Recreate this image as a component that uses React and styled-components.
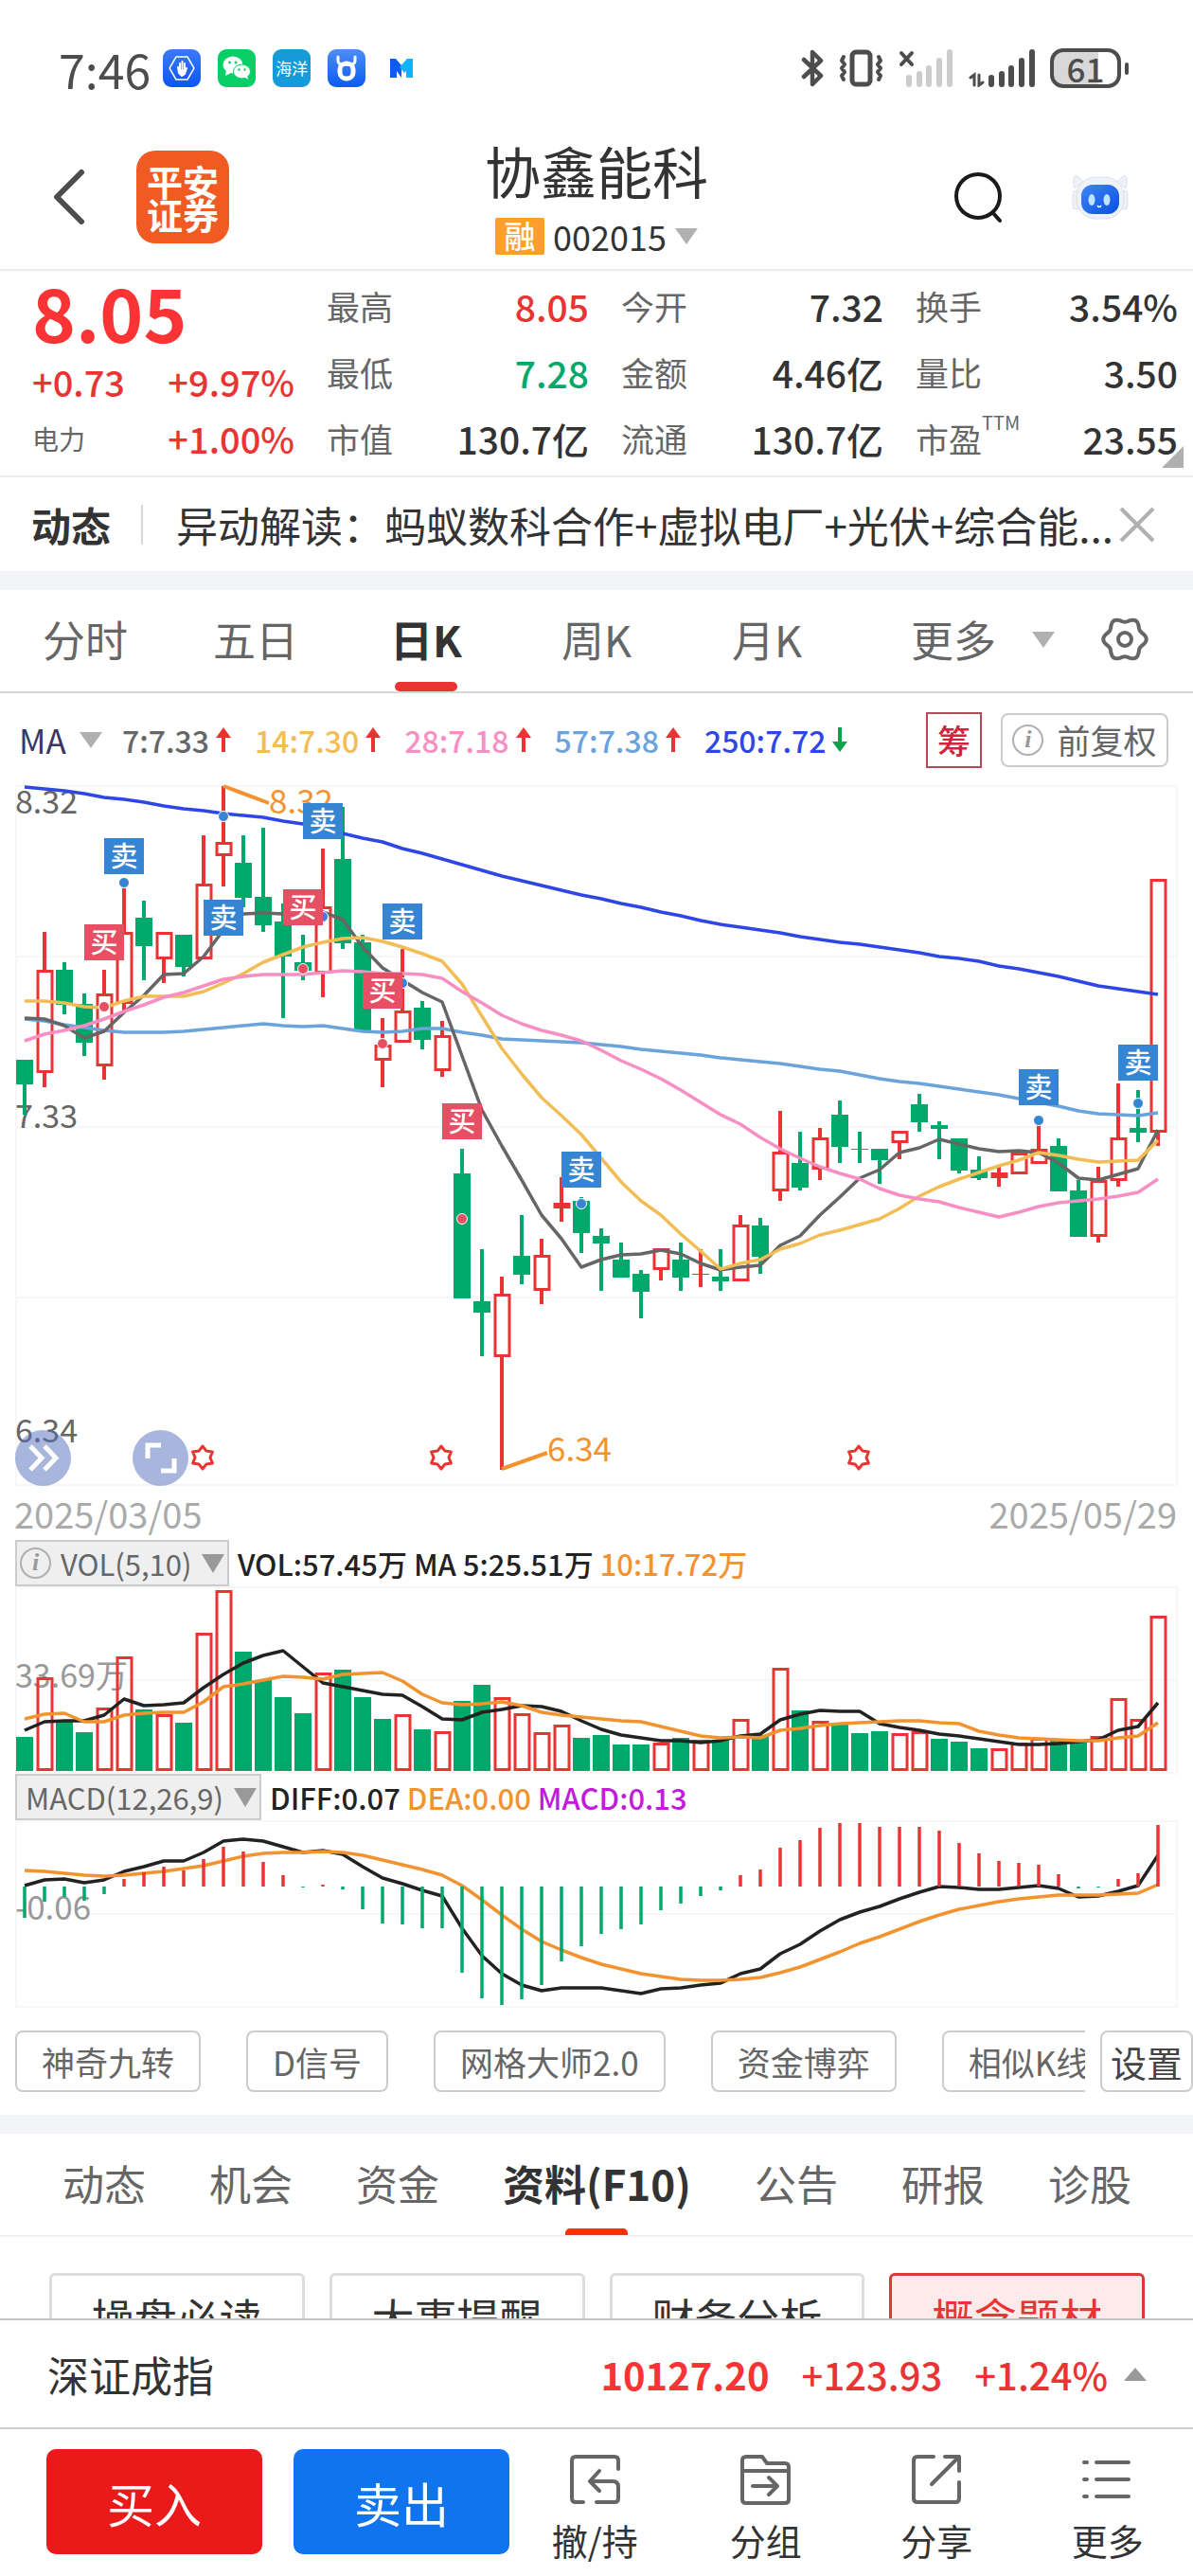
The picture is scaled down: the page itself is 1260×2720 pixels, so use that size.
import React, { useState } from "react";
import styled, { createGlobalStyle } from "styled-components";

const GlobalStyle = createGlobalStyle`
  * {
    box-sizing: border-box;
  }
  body {
    margin: 0;
    background: #fff;
    color: #333;
    font-family: "Noto Sans CJK SC", "Noto Sans", sans-serif;
  }
  button,
  select {
    margin: 0;
    padding: 0;
    border: 0;
    background: none;
    color: inherit;
    font: inherit;
    cursor: pointer;
  }
  select {
    appearance: none;
  }
  svg {
    display: block;
    flex: none;
  }
`;

const RED = "#ea3434";
const GREEN = "#00a96b";
const ORANGE = "#f39330";
const FONT = '"Noto Sans CJK SC", "Noto Sans", sans-serif';

const Page = styled.div`
  display: flex;
  flex-direction: column;
  height: 100vh;
  overflow: hidden;
`;

const Content = styled.main`
  flex: 1;
  min-height: 0;
  overflow: hidden;
`;

const Band = styled.div`
  height: 20px;
  background: #f3f4f8;
`;

const Triangle = styled.span`
  display: block;
  flex: none;
  width: 0;
  height: 0;
  border: solid transparent;
  border-width: ${(p) => (p.$up ? "0 12px 14px" : p.$tall ? "20px 12px 0" : "17px 12px 0")};
  border-${(p) => (p.$up ? "bottom" : "top")}-color: ${(p) => p.$color || "#b0b0b0"};
`;

/* status bar */

const StatusBar = styled.div`
  display: flex;
  align-items: center;
  height: 144px;
  padding: 0 76px 0 62px;
  color: #4d4d4d;
`;

const Clock = styled.span`
  margin-right: 13px;
  font-size: 50px;
  line-height: 56px;
`;

const StatusIcons = styled.div`
  display: flex;
  align-items: center;
  gap: ${(p) => p.$gap}px;
  margin-left: ${(p) => (p.$end ? "auto" : "0")};
`;

const AppBadge = styled.span`
  display: flex;
  align-items: center;
  justify-content: center;
  width: 40px;
  height: 40px;
  border-radius: 9px;
  background: ${(p) => p.$bg};
  color: #fff;
  font-size: 17px;
  line-height: 20px;
`;

const Battery = styled.span`
  position: relative;
  display: flex;
  align-items: center;
  justify-content: center;
  width: 75px;
  height: 42px;
  border: 4px solid #4d4d4d;
  border-radius: 14px;
  background: linear-gradient(90deg, #d8d8d8 70%, #fff 70%);
  font-size: 35px;
  font-weight: 500;
  line-height: 36px;

  &::after {
    content: "";
    position: absolute;
    right: -12px;
    width: 4px;
    height: 13px;
    border-radius: 2px;
    background: #4d4d4d;
  }
`;

/* header */

const Header = styled.header`
  display: grid;
  grid-template-columns: 1fr auto 1fr;
  align-items: center;
  height: 142px;
  padding: 0 54px 12px;
  border-bottom: 2px solid #ececec;
`;

const HeaderSide = styled.div`
  display: flex;
  align-items: center;
  gap: ${(p) => (p.$end ? 72 : 54)}px;
  justify-content: ${(p) => (p.$end ? "flex-end" : "flex-start")};
  padding-right: ${(p) => (p.$end ? 14 : 0)}px;
`;

const Logo = styled.div`
  display: flex;
  align-items: center;
  justify-content: center;
  width: 98px;
  height: 98px;
  border-radius: 20px;
  background: #f15a22;
  color: #fff;
  font-size: 38px;
  font-weight: 700;
  line-height: 35px;
  text-align: center;
`;

const Title = styled.h1`
  margin: 0 0 10px;
  font-size: 59px;
  font-weight: 400;
  line-height: 72px;
`;

const CodeButton = styled.button`
  display: flex;
  align-items: center;
  justify-content: center;
  gap: 9px;
  width: 100%;
  font-size: 36px;
  line-height: 46px;
`;

const Tag = styled.span`
  width: 52px;
  height: 39px;
  border-radius: 2px;
  background: #ff9f2b;
  color: #fff;
  font-size: 33px;
  font-weight: 500;
  line-height: 37px;
`;

/* quote panel */

const Quote = styled.section`
  position: relative;
  display: grid;
  grid-template-columns: repeat(4, 1fr);
  column-gap: 34px;
  padding: 2px 16px 4px 34px;
  border-bottom: 2px solid #ececec;
`;

const PriceColumn = styled.div`
  color: ${RED};
  font-size: 38px;
  font-weight: 500;
`;

const Price = styled.div`
  color: #fa3434;
  font-size: 78px;
  font-weight: 700;
  line-height: 80px;
`;

const PriceRow = styled.div`
  display: flex;
  justify-content: space-between;
  line-height: ${(p) => p.$height}px;
`;

const Sector = styled.span`
  color: #666;
  font-size: 28px;
  font-weight: 400;
`;

const Stats = styled.dl`
  margin: 0;
`;

const Stat = styled.div`
  display: flex;
  justify-content: space-between;
  height: 70px;
  line-height: 70px;

  dt {
    color: #666;
    font-size: 35px;
  }
  dd {
    margin: 0;
    color: ${(p) => p.$color || "#333"};
    font-size: 39px;
    font-weight: 500;
  }
  sup {
    font-size: 20px;
    line-height: 20px;
    vertical-align: 24px;
  }
`;

const Corner = styled.span`
  position: absolute;
  right: 10px;
  bottom: 8px;
  width: 23px;
  height: 23px;
  background: #b0b0b0;
  clip-path: polygon(100% 0, 100% 100%, 0 100%);
`;

/* news line */

const News = styled.section`
  display: flex;
  align-items: center;
  height: 99px;
  padding: 0 40px 0 33px;
  font-size: 44px;
  line-height: 60px;

  strong {
    font-size: 42px;
  }
  i {
    width: 2px;
    height: 42px;
    margin: 0 35px 0 32px;
    background: #d8d8d8;
  }
  p {
    flex: 1;
    margin: 0;
    white-space: nowrap;
  }
`;

/* period tabs */

const PeriodTabs = styled.nav`
  display: grid;
  grid-template-columns: repeat(5, 1fr) 2fr;
  height: 109px;
  border-bottom: 2px solid #d8d8d8;
  font-size: 45px;
  line-height: 60px;
`;

const PeriodTab = styled.button`
  position: relative;
  padding-bottom: 3px;
  color: ${(p) => (p.$active ? "#333" : "#666")};
  font-weight: ${(p) => (p.$active ? 700 : 400)};

  &::after {
    content: "";
    display: ${(p) => (p.$active ? "block" : "none")};
    position: absolute;
    bottom: 0;
    left: calc(50% - 33px);
    width: 66px;
    height: 10px;
    border-radius: 5px;
    background: ${RED};
  }
`;

const PeriodMore = styled.div`
  display: flex;
  align-items: center;
  justify-content: space-between;
  padding: 0 47px 3px 62px;
  color: #666;

  button {
    display: flex;
    align-items: center;
    gap: 38px;
  }
`;

/* main chart */

const Legend = styled.div`
  display: flex;
  align-items: center;
  height: 94px;
  padding: 4px 26px 0 20px;
  font-size: 32px;
  font-weight: 500;
  line-height: 44px;
`;

const MaSelect = styled.label`
  display: flex;
  align-items: center;
  gap: 14px;
  margin-right: 21px;
  color: #3a3767;
  font-size: 35px;
  font-weight: 400;
`;

const MaItem = styled.span`
  display: flex;
  align-items: center;
  gap: 7px;
  margin-right: 25px;
  color: ${(p) => p.$color};
`;

const ChipButton = styled.button`
  width: 59px;
  height: 59px;
  margin-left: auto;
  border: 2px solid #b8495a;
  color: #d2243f;
  font-size: 35px;
`;

const AdjustButton = styled.button`
  display: flex;
  align-items: center;
  justify-content: center;
  gap: 14px;
  width: 177px;
  height: 57px;
  margin-left: 20px;
  border: 2px solid #ccc;
  border-radius: 8px;
  color: #666;
  font-size: 35px;
  font-weight: 400;
`;

const Info = styled.span`
  flex: none;
  width: 33px;
  height: 33px;
  border: 2px solid #b0b0b0;
  border-radius: 50%;
  color: #999;
  font: italic 700 26px/28px "Liberation Serif", serif;
  text-align: center;
`;

const ChartArea = styled.div`
  position: relative;

  svg {
    width: 100%;
    height: auto;
  }
`;

const RoundButton = styled.button`
  position: absolute;
  bottom: 3px;
  left: ${(p) => p.$left}px;
  width: 59px;
  height: 59px;
  border-radius: 50%;
  background: rgba(82, 110, 190, 0.5);
`;

const Dates = styled.div`
  display: flex;
  justify-content: space-between;
  padding: 0 17px 2px 15px;
  color: #aaa;
  font-size: 38px;
  line-height: 52px;
`;

const IndicatorBar = styled.div`
  display: flex;
  align-items: center;
  gap: 9px;
  padding-left: 16px;
  font-size: 31px;
  font-weight: 500;
  line-height: 44px;
`;

const IndicatorSelect = styled.label`
  display: flex;
  align-items: center;
  gap: 10px;
  height: 49px;
  padding: 0 3px 0 ${(p) => (p.$info ? 3 : 9)}px;
  border: 2px solid #ccc;
  background: #efefef;
  color: #666;
  font-weight: 400;

  select {
    height: 44px;
  }
`;

const Value = styled.span`
  color: ${(p) => p.$color || "#222"};
  white-space: pre;
`;

/* strategy chips */

const Chips = styled.div`
  display: flex;
  gap: 16px;
  padding: 24px 0 24px 16px;
`;

const ChipScroll = styled.div`
  display: flex;
  flex: 1;
  gap: 48px;
  min-width: 0;
  overflow: hidden;
`;

const Chip = styled.button`
  flex: none;
  height: 65px;
  padding: 0 ${(p) => (p.$tight ? 9 : 26)}px;
  border: 2px solid #ccc;
  border-radius: 8px;
  color: ${(p) => (p.$tight ? "#444" : "#666")};
  font-size: ${(p) => (p.$tight ? 38 : 35)}px;
  line-height: 56px;
  white-space: nowrap;
`;

/* detail tabs */

const DetailTabs = styled.nav`
  display: flex;
  gap: 67px;
  height: 109px;
  padding-left: 66px;
  overflow: hidden;
  border-bottom: 2px solid #f0f0f0;
  font-size: 44px;
  line-height: 60px;
`;

const DetailTab = styled(PeriodTab)`
  flex: none;

  &::after {
    height: 7px;
    border-radius: 5px 5px 0 0;
    background: #ff2f00;
  }
`;

const Cards = styled.div`
  display: grid;
  grid-template-columns: repeat(4, 1fr);
  gap: 26px;
  padding: 38px 51px 0 52px;
`;

const Card = styled.button`
  height: 94px;
  border: 3px solid ${(p) => (p.$active ? "#d83a3a" : "#ddd")};
  border-radius: 6px;
  background: ${(p) => (p.$active ? "#fdeaea" : "#fff")};
  color: ${(p) => (p.$active ? RED : "#333")};
  font-size: 45px;
  line-height: 60px;
`;

/* bottom bars */

const IndexBar = styled.section`
  display: flex;
  align-items: center;
  gap: 34px;
  height: 115px;
  padding: 0 49px 0 50px;
  border-top: 2px solid #c4c4c4;
  color: ${RED};
  font-size: 40px;
  font-weight: 500;
  line-height: 60px;

  h2 {
    margin: 0 auto 0 0;
    color: #333;
    font-size: 44px;
    font-weight: 400;
  }
  strong {
    color: #fa3434;
  }
  button {
    margin-left: -17px;
  }
`;

const ActionBar = styled.footer`
  display: flex;
  align-items: flex-start;
  height: 157px;
  padding: 21px 0 0 49px;
  border-top: 2px solid #ccc;
`;

const TradeButton = styled.button`
  width: 228px;
  height: 111px;
  margin-right: ${(p) => (p.$last ? 0 : 33)}px;
  border-radius: 10px;
  background: ${(p) => p.$bg};
  color: #fff;
  font-size: 50px;
  line-height: 70px;
`;

const Actions = styled.div`
  display: grid;
  flex: 1;
  grid-template-columns: repeat(4, 1fr);
`;

const Action = styled.button`
  display: flex;
  flex-direction: column;
  align-items: center;
  gap: 8px;
  padding-top: 5px;
  font-size: 38px;
  line-height: 56px;
`;

// x of the i-th trading day
const dayX = (i) => 26 + 21 * i;

// [up, high, body top, body bottom, low]
const candles = [
  [0, 1119, 1119, 1145, 1177],
  [1, 984, 1024, 1133, 1148],
  [0, 1016, 1024, 1061, 1071],
  [0, 1049, 1060, 1101, 1115],
  [1, 1024, 1049, 1126, 1140],
  [1, 932, 984, 1060, 1067],
  [0, 951, 969, 999, 1035],
  [1, 984, 984, 1013, 1038],
  [0, 987, 987, 1021, 1031],
  [1, 882, 933, 1013, 1013],
  [1, 830, 889, 904, 936],
  [0, 882, 911, 948, 958],
  [0, 874, 947, 977, 984],
  [0, 954, 973, 1010, 1075],
  [0, 987, 1016, 1025, 1035],
  [1, 896, 957, 1028, 1053],
  [0, 852, 907, 996, 1002],
  [0, 987, 995, 1089, 1089],
  [1, 1075, 1103, 1120, 1148],
  [1, 1002, 1067, 1101, 1101],
  [0, 1057, 1064, 1098, 1108],
  [1, 1078, 1093, 1131, 1137],
  [0, 1213, 1239, 1371, 1371],
  [0, 1319, 1374, 1386, 1432],
  [1, 1348, 1366, 1433, 1552],
  [0, 1283, 1326, 1346, 1356],
  [1, 1308, 1325, 1363, 1377],
  [1, 1243, 1270, 1276, 1290],
  [0, 1264, 1268, 1302, 1323],
  [0, 1297, 1305, 1313, 1363],
  [0, 1312, 1330, 1349, 1349],
  [0, 1341, 1345, 1364, 1392],
  [1, 1318, 1318, 1341, 1352],
  [0, 1312, 1330, 1349, 1363],
  [1, 1319, 1345, 1345, 1359],
  [0, 1319, 1348, 1353, 1363],
  [1, 1283, 1293, 1353, 1353],
  [0, 1286, 1294, 1327, 1345],
  [1, 1173, 1216, 1258, 1268],
  [0, 1195, 1228, 1254, 1257],
  [1, 1191, 1201, 1235, 1246],
  [0, 1162, 1177, 1211, 1228],
  [0, 1195, 1213, 1214, 1228],
  [0, 1213, 1213, 1225, 1250],
  [1, 1194, 1194, 1207, 1224],
  [0, 1155, 1166, 1185, 1195],
  [0, 1184, 1188, 1192, 1224],
  [0, 1202, 1202, 1236, 1239],
  [0, 1221, 1235, 1244, 1246],
  [1, 1232, 1238, 1244, 1253],
  [1, 1217, 1217, 1240, 1240],
  [1, 1183, 1213, 1229, 1229],
  [0, 1202, 1210, 1258, 1258],
  [0, 1246, 1257, 1306, 1306],
  [1, 1232, 1246, 1306, 1312],
  [1, 1144, 1201, 1247, 1253],
  [0, 1151, 1191, 1196, 1206],
  [1, 928, 928, 1196, 1210],
];

const maLines = [
  ["#6ba3dd", [1076, 1078, 1082, 1085, 1088, 1090, 1090, 1090, 1089, 1087, 1085, 1083, 1081, 1083, 1084, 1083, 1086, 1089, 1090, 1089, 1086, 1086, 1090, 1093, 1097, 1098, 1099, 1100, 1101, 1103, 1105, 1108, 1110, 1112, 1114, 1117, 1119, 1121, 1123, 1126, 1129, 1131, 1135, 1139, 1142, 1144, 1147, 1150, 1153, 1156, 1160, 1164, 1168, 1173, 1176, 1177, 1178, 1175]],
  ["#666666", [1075, 1076, 1083, 1096, 1089, 1069, 1051, 1029, 1028, 1010, 982, 965, 964, 965, 965, 963, 971, 1000, 1022, 1035, 1048, 1058, 1115, 1172, 1210, 1246, 1283, 1308, 1338, 1330, 1325, 1324, 1320, 1324, 1334, 1341, 1338, 1336, 1315, 1305, 1283, 1264, 1244, 1235, 1217, 1212, 1203, 1208, 1213, 1216, 1215, 1217, 1228, 1244, 1246, 1240, 1234, 1193]],
  ["#f3bd55", [1057, 1057, 1059, 1063, 1064, 1057, 1052, 1052, 1052, 1047, 1038, 1028, 1016, 1008, 1000, 995, 991, 990, 994, 1000, 1007, 1015, 1039, 1073, 1107, 1134, 1159, 1178, 1198, 1223, 1248, 1268, 1283, 1303, 1321, 1340, 1334, 1330, 1319, 1313, 1304, 1299, 1293, 1287, 1276, 1263, 1253, 1245, 1238, 1231, 1225, 1217, 1220, 1224, 1227, 1226, 1225, 1204]],
  ["#f78fc4", [1099, 1092, 1088, 1083, 1076, 1068, 1061, 1053, 1048, 1041, 1034, 1031, 1029, 1029, 1029, 1027, 1025, 1026, 1028, 1028, 1029, 1033, 1047, 1059, 1072, 1081, 1088, 1093, 1099, 1109, 1120, 1129, 1139, 1151, 1164, 1177, 1187, 1201, 1213, 1223, 1232, 1239, 1245, 1255, 1262, 1266, 1269, 1275, 1280, 1285, 1280, 1274, 1270, 1268, 1266, 1263, 1259, 1245]],
  ["#2f46e6", [831, 833, 835, 838, 842, 844, 847, 851, 854, 856, 859, 861, 863, 867, 870, 875, 880, 885, 889, 896, 901, 907, 913, 919, 925, 930, 935, 940, 945, 949, 954, 958, 963, 967, 972, 976, 979, 982, 985, 989, 992, 995, 997, 1000, 1003, 1006, 1010, 1012, 1015, 1020, 1023, 1027, 1031, 1036, 1041, 1044, 1047, 1050]],
];

// [day, dot y, tag x, tag y, sell]
const trades = [
  [5, 932, 110, 885, 1],
  [10, 862, 215, 950, 1],
  [15, 968, 320, 848, 1],
  [19, 1038, 404, 954, 1],
  [28, 1271, 593, 1216, 1],
  [51, 1183, 1076, 1129, 1],
  [56, 1165, 1181, 1103, 1],
  [4, 1063, 89, 976, 0],
  [14, 1023, 299, 939, 0],
  [18, 1102, 383, 1027, 0],
  [22, 1287, 467, 1165, 0],
];

const volumeUp = "0100110101100001000101001111000010101010100011000111001111";
const volumes = [1834, 1771, 1817, 1829, 1803, 1749, 1805, 1810, 1819, 1724, 1679, 1744, 1774, 1792, 1809, 1766, 1763, 1792, 1815, 1810, 1826, 1828, 1796, 1779, 1792, 1809, 1829, 1821, 1835, 1832, 1842, 1842, 1840, 1835, 1837, 1838, 1815, 1832, 1761, 1806, 1817, 1820, 1830, 1828, 1830, 1828, 1836, 1839, 1846, 1846, 1840, 1835, 1838, 1839, 1833, 1793, 1815, 1706];
const volumeMa5 = [1827, 1818, 1817, 1817, 1811, 1794, 1801, 1800, 1798, 1782, 1768, 1756, 1748, 1743, 1760, 1777, 1781, 1785, 1789, 1790, 1802, 1815, 1816, 1808, 1805, 1801, 1802, 1807, 1817, 1826, 1832, 1835, 1838, 1838, 1840, 1838, 1833, 1831, 1816, 1810, 1806, 1807, 1807, 1820, 1824, 1827, 1831, 1833, 1836, 1839, 1842, 1842, 1841, 1839, 1837, 1827, 1823, 1798];
const volumeMa10 = [1815, 1810, 1809, 1818, 1818, 1811, 1809, 1808, 1808, 1797, 1781, 1778, 1774, 1770, 1771, 1773, 1768, 1767, 1766, 1775, 1789, 1798, 1800, 1799, 1797, 1801, 1808, 1811, 1813, 1815, 1817, 1818, 1823, 1828, 1833, 1835, 1834, 1835, 1827, 1825, 1822, 1820, 1819, 1818, 1817, 1817, 1819, 1820, 1828, 1832, 1835, 1836, 1837, 1838, 1838, 1835, 1833, 1819];

const macd = [2025, 2008, 2003, 2007, 2000, 1984, 1977, 1971, 1975, 1963, 1950, 1955, 1966, 1980, 1993, 1990, 1995, 2016, 2031, 2032, 2036, 2036, 2083, 2110, 2117, 2111, 2096, 2071, 2055, 2042, 2037, 2032, 2017, 2010, 2002, 1996, 1980, 1974, 1951, 1943, 1930, 1925, 1925, 1929, 1929, 1929, 1933, 1946, 1957, 1965, 1967, 1969, 1979, 1994, 1993, 1984, 1978, 1927];
const diff = [1991, 1985, 1984, 1988, 1985, 1976, 1971, 1965, 1965, 1956, 1944, 1942, 1944, 1950, 1956, 1954, 1958, 1971, 1983, 1989, 1996, 2002, 2036, 2065, 2084, 2096, 2102, 2099, 2099, 2099, 2102, 2105, 2100, 2099, 2096, 2094, 2084, 2079, 2063, 2053, 2039, 2027, 2019, 2013, 2005, 1998, 1992, 1993, 1995, 1995, 1993, 1991, 1994, 2003, 2002, 1997, 1991, 1959];
const dea = [1975, 1976, 1978, 1980, 1981, 1980, 1978, 1976, 1973, 1970, 1965, 1960, 1957, 1956, 1956, 1955, 1956, 1959, 1964, 1969, 1974, 1980, 1991, 2006, 2022, 2037, 2050, 2059, 2067, 2074, 2079, 2084, 2087, 2090, 2091, 2091, 2090, 2088, 2083, 2077, 2069, 2061, 2052, 2045, 2037, 2029, 2022, 2016, 2012, 2008, 2005, 2003, 2001, 2001, 2001, 2000, 1999, 1990];

const averages = [
  ["7:7.33", "#666", true],
  ["14:7.30", "#f3bd55", true],
  ["28:7.18", "#f78fc4", true],
  ["57:7.38", "#6ba3dd", true],
  ["250:7.72", "#2f46e6", false],
];

const stats = [
  [
    ["最高", "8.05", RED],
    ["最低", "7.28", GREEN],
    ["市值", "130.7亿"],
  ],
  [
    ["今开", "7.32"],
    ["金额", "4.46亿"],
    ["流通", "130.7亿"],
  ],
  [
    ["换手", "3.54%"],
    ["量比", "3.50"],
    ["市盈", "23.55", null, "TTM"],
  ],
];

const polar = (cx, cy, r, deg) => {
  const a = (deg * Math.PI) / 180;
  return `${(cx + r * Math.cos(a)).toFixed(2)},${(cy + r * Math.sin(a)).toFixed(2)}`;
};

const gearPoints = Array.from({ length: 120 }, (_, i) =>
  polar(25, 25, 20.5 + 2.2 * Math.cos((i * 18 * Math.PI) / 180), i * 3)
).join(" ");

function Series({ points, color }) {
  return (
    <polyline
      points={points.map((y, i) => `${dayX(i)},${y}`).join(" ")}
      fill="none"
      stroke={color}
      strokeWidth="3.5"
      strokeLinejoin="round"
    />
  );
}

function Frame({ top, bottom, lines }) {
  return (
    <g stroke="#f7f7f8" strokeWidth="2" fill="none">
      <rect x="17" y={top} width="1226" height={bottom - top} />
      {lines.map((y) => (
        <path key={y} d={`M17 ${y}H1243`} />
      ))}
    </g>
  );
}

function Star({ x, y }) {
  const points = Array.from({ length: 12 }, (_, i) =>
    polar(x, y, i % 2 ? 8 : 12, i * 30 - 90)
  ).join(" ");
  return (
    <polygon points={points} fill="#fff" stroke={RED} strokeWidth="3" strokeLinejoin="round" />
  );
}

function Candle({ x, data: [up, high, top, bottom, low] }) {
  const color = up ? RED : GREEN;
  const height = bottom - top;
  return (
    <g>
      <path d={`M${x} ${high}V${low}`} stroke={color} strokeWidth="4" />
      {!up && <rect x={x - 9} y={top} width="18" height={height} fill={color} />}
      {up && height > 0 && (
        <rect x={x - 7} y={top + 1.5} width="15" height={height - 3} fill="#fff" stroke={color} strokeWidth="3" />
      )}
      {up && height === 0 && <rect x={x - 9} y={top} width="18" height="1" fill={color} />}
    </g>
  );
}

function CandleChart() {
  return (
    <svg viewBox="0 826 1260 746" fontFamily={FONT}>
      <Frame top={830} bottom={1568} lines={[1010, 1190, 1370]} />
      <g fill="#666" fontSize="34">
        <text x="16" y="859">8.32</text>
        <text x="16" y="1191">7.33</text>
        <text x="16" y="1523">6.34</text>
      </g>
      {candles.map((data, i) => (
        <Candle key={i} x={dayX(i)} data={data} />
      ))}
      {maLines.map(([color, points]) => (
        <Series key={color} points={points} color={color} />
      ))}
      <g fill={ORANGE} fontSize="35">
        <path d="M236 830L284 848M530 1551L578 1534" stroke={ORANGE} strokeWidth="4" />
        <text x="284" y="859">8.32</text>
        <text x="578" y="1543">6.34</text>
      </g>
      {trades.map(([day, y, , , sell]) => (
        <circle key={day} cx={dayX(day)} cy={y} r="5.5" fill={sell ? "#3585d3" : "#e55064"} stroke="#fff" />
      ))}
      {trades.map(([day, , x, y, sell]) => (
        <g key={day}>
          <rect x={x} y={y} width="42" height="38" fill={sell ? "#3585d3" : "#e55064"} />
          <text x={x + 21} y={y + 30} fill="#fff" fontSize="29" fontWeight="500" textAnchor="middle">
            {sell ? "卖" : "买"}
          </text>
        </g>
      ))}
      {[214, 466, 907].map((x) => (
        <Star key={x} x={x} y={1539} />
      ))}
    </svg>
  );
}

function VolumeChart() {
  return (
    <svg viewBox="0 1675 1260 198" fontFamily={FONT}>
      <Frame top={1676} bottom={1872} lines={[1774]} />
      <text x="16" y="1782" fill="#999" fontSize="34">33.69万</text>
      {volumes.map((y, i) =>
        volumeUp[i] === "1" ? (
          <rect key={i} x={dayX(i) - 7} y={y + 1.5} width="15" height={1867 - y} fill="none" stroke={RED} strokeWidth="3" />
        ) : (
          <rect key={i} x={dayX(i) - 9} y={y} width="18" height={1870 - y} fill={GREEN} />
        )
      )}
      <Series points={volumeMa5} color="#222" />
      <Series points={volumeMa10} color={ORANGE} />
    </svg>
  );
}

function MacdChart() {
  return (
    <svg viewBox="0 1922 1260 198" fontFamily={FONT}>
      <Frame top={1923} bottom={2119} lines={[2021]} />
      <text x="16" y="2027" fill="#999" fontSize="35">-0.06</text>
      <Series points={diff} color="#222" />
      <Series points={dea} color={ORANGE} />
      {macd.map((y, i) => (
        <path key={i} d={`M${dayX(i)} 1992V${y}`} stroke={y < 1992 ? RED : GREEN} strokeWidth="3.5" />
      ))}
    </svg>
  );
}

function Arrow({ up }) {
  return (
    <svg width="16" height="26" viewBox="0 0 16 26">
      <g transform={up ? undefined : "rotate(180 8 13)"} fill={up ? RED : "#0aa34c"}>
        <path d="M8 0L16 11H0z" />
        <path d="M6 8h4v18h-4z" />
      </g>
    </svg>
  );
}

function SystemStatus() {
  return (
    <StatusBar>
      <Clock>7:46</Clock>
      <StatusIcons $gap={18}>
        <AppBadge $bg="linear-gradient(#3b7bf8, #0b55f0)">
          <svg width="30" height="30" viewBox="0 0 30 30" fill="none" stroke="#fff">
            <path d="M9 3h12l7 12-7 12H9L2 15z" strokeWidth="1.5" />
            <path d="M11 14l1 6 3 3 3-2 2-6M13 18V10M15.5 17V8M18 17v-7" strokeWidth="2" strokeLinecap="round" />
            <path d="M12 17h7l-1 4-3 1-3-2z" fill="#fff" />
          </svg>
        </AppBadge>
        <AppBadge $bg="#07cf66">
          <svg width="30" height="26" viewBox="0 0 30 26" fill="#fff">
            <ellipse cx="11" cy="9.500" rx="10.500" ry="9" />
            <path d="M4 15l-1 6 6-3z" />
            <ellipse cx="20.500" cy="16.500" rx="9" ry="7.500" stroke="#07cf66" />
            <path d="M23 22l4 3-1-5z" />
            <g fill="#07cf66">
              <circle cx="7.500" cy="7" r="1.400" />
              <circle cx="14" cy="7" r="1.400" />
              <circle cx="17.500" cy="14.500" r="1.200" />
              <circle cx="23.500" cy="14.500" r="1.200" />
            </g>
          </svg>
        </AppBadge>
        <AppBadge $bg="#149bd8">海洋</AppBadge>
        <AppBadge $bg="linear-gradient(#4d8df7, #0a5cf0)">
          <svg width="26" height="28" viewBox="0 0 26 28" fill="none" stroke="#fff">
            <rect x="6" y="9" width="14" height="16" rx="6.500" strokeWidth="5" />
            <path d="M4 2v4q0 4 5 4h8q5 0 5-4V2" strokeWidth="3" strokeLinecap="round" />
          </svg>
        </AppBadge>
        <AppBadge $bg="none">
          <svg width="26" height="22" viewBox="0 0 26 22">
            <path d="M1 1h6l6 7v13L8 14v7H1z" fill="#0b5cf0" />
            <path d="M25 1h-6l-8 9 5 6 2-2v7h7z" fill="#0bb4ff" />
          </svg>
        </AppBadge>
      </StatusIcons>
      <StatusIcons $gap={16} $end>
        <svg width="24" height="40" viewBox="0 0 24 40" fill="none" stroke="#4d4d4d" strokeWidth="4.500" strokeLinejoin="round" strokeLinecap="round">
          <path d="M3 11l18 17-9 9V3l9 9L3 29" />
        </svg>
        <svg width="47" height="40" viewBox="0 0 47 40" fill="none" stroke="#4d4d4d" strokeWidth="5" strokeLinejoin="round" strokeLinecap="round">
          <rect x="14" y="3" width="19" height="34" rx="4" />
          <path d="M5 8l-2 4 3 4-3 4 3 4-3 4 2 4M42 8l2 4-3 4 3 4-3 4 3 4-2 4" strokeWidth="4" />
        </svg>
        <svg width="58" height="40" viewBox="0 0 58 40" strokeLinecap="round">
          <path d="M3 4l11 12M14 4L3 16" stroke="#4d4d4d" strokeWidth="4" />
          <path d="M11 30v7M22 26v11M32 20v17M43 12v25M54 3v34" stroke="#ccc" strokeWidth="6" />
        </svg>
        <svg width="70" height="40" viewBox="0 0 70 40" strokeLinecap="round">
          <path d="M2 30l4-3v11M11 27v11l4-3" stroke="#4d4d4d" strokeWidth="3" fill="none" />
          <path d="M24 30v7M35 26v11M45 20v17M56 12v25M67 3v34" stroke="#4d4d4d" strokeWidth="6" />
        </svg>
        <Battery>61</Battery>
      </StatusIcons>
    </StatusBar>
  );
}

function Robot() {
  return (
    <svg width="60" height="50" viewBox="0 0 60 50">
      <defs>
        <linearGradient id="face" x1="0" y1="0" x2="1" y2="1">
          <stop offset="0" stopColor="#3f86f5" />
          <stop offset="1" stopColor="#0a4fe0" />
        </linearGradient>
      </defs>
      <g fill="#eef1f7" stroke="#dde1ea">
        <path d="M3 16Q0 4 4 2q5 3 8 7zM57 16q3-12-1-14-5 3-8 7z" />
        <rect x="1" y="18" width="8" height="20" rx="4" />
        <rect x="51" y="18" width="8" height="20" rx="4" />
        <rect x="5" y="4" width="50" height="44" rx="20" />
      </g>
      <rect x="10" y="12" width="40" height="31" rx="12" fill="url(#face)" />
      <ellipse cx="21" cy="28" rx="3.500" ry="6" fill="#bfe4ff" />
      <ellipse cx="37" cy="28" rx="3.500" ry="6" fill="#bfe4ff" />
      <path d="M27 34q2 3 4 0" stroke="#fff" fill="none" strokeWidth="1.500" />
    </svg>
  );
}

const actions = [
  ["撤/持", <path key="a" d="M52 16V7q0-4-4-4H7Q3 3 3 7v40q0 4 4 4h8M29 51h19q4 0 4-4V35q0-6-6-6H22M32 18L22 29l10 10" />],
  ["分组", <path key="b" d="M3 18V7q0-4 4-4h17l5 7h19q4 0 4 4v34q0 4-4 4H7q-4 0-4-4V18h49M14 34h25M31 25l9 9-9 9" />],
  ["分享", <path key="c" d="M24 3H7Q3 3 3 7v40q0 4 4 4h40q4 0 4-4V30M22 32L51 3M36 3h15v15" />],
  ["更多", <path key="d" d="M3 9h3M16 9h34M3 27h3M16 27h34M3 45h3M16 45h34" />],
];

function App() {
  const [period, setPeriod] = useState("日K");
  const [detail, setDetail] = useState("资料(F10)");
  const [card, setCard] = useState("概念题材");

  return (
    <Page>
      <GlobalStyle />
      <Content>
        <SystemStatus />
        <Header>
          <HeaderSide>
            <button aria-label="返回">
              <svg width="36" height="60" viewBox="0 0 36 60" fill="none" stroke="#4d4d4d" strokeWidth="6" strokeLinecap="round" strokeLinejoin="round">
                <path d="M32 4L6 30l26 26" />
              </svg>
            </button>
            <Logo>
              平安
              <br />
              证券
            </Logo>
          </HeaderSide>
          <div>
            <Title>协鑫能科</Title>
            <CodeButton>
              <Tag>融</Tag>
              002015
              <Triangle />
            </CodeButton>
          </div>
          <HeaderSide $end>
            <button aria-label="搜索">
              <svg width="54" height="56" viewBox="0 0 54 56" fill="none" stroke="#1a1a1a" strokeWidth="4" strokeLinecap="round">
                <circle cx="27" cy="27" r="23" />
                <path d="M43 45l7 8" />
              </svg>
            </button>
            <button aria-label="智能助手">
              <Robot />
            </button>
          </HeaderSide>
        </Header>

        <Quote>
          <PriceColumn>
            <Price>8.05</Price>
            <PriceRow $height={70}>
              <span>+0.73</span>
              <span>+9.97%</span>
            </PriceRow>
            <PriceRow $height={50}>
              <Sector>电力</Sector>
              <span>+1.00%</span>
            </PriceRow>
          </PriceColumn>
          {stats.map((column, i) => (
            <Stats key={i}>
              {column.map(([name, value, color, note]) => (
                <Stat key={name} $color={color}>
                  <dt>
                    {name}
                    {note && <sup>{note}</sup>}
                  </dt>
                  <dd>{value}</dd>
                </Stat>
              ))}
            </Stats>
          ))}
          <Corner />
        </Quote>

        <News>
          <strong>动态</strong>
          <i />
          <p>异动解读：蚂蚁数科合作+虚拟电厂+光伏+综合能...</p>
          <button aria-label="关闭">
            <svg width="38" height="38" viewBox="0 0 38 38" stroke="#b0b0b0" strokeWidth="4">
              <path d="M2 2l34 34M36 2L2 36" />
            </svg>
          </button>
        </News>
        <Band />

        <PeriodTabs>
          {["分时", "五日", "日K", "周K", "月K"].map((name) => (
            <PeriodTab key={name} $active={period === name} onClick={() => setPeriod(name)}>
              {name}
            </PeriodTab>
          ))}
          <PeriodMore>
            <button>
              更多
              <Triangle />
            </button>
            <button aria-label="图表设置">
              <svg width="50" height="50" viewBox="0 0 50 50" fill="none" stroke="#666" strokeWidth="4">
                <polygon points={gearPoints} />
                <circle cx="25" cy="25" r="7" />
              </svg>
            </button>
          </PeriodMore>
        </PeriodTabs>

        <Legend>
          <MaSelect>
            <select aria-label="主图指标">
              <option>MA</option>
            </select>
            <Triangle />
          </MaSelect>
          {averages.map(([text, color, up]) => (
            <MaItem key={text} $color={color}>
              {text}
              <Arrow up={up} />
            </MaItem>
          ))}
          <ChipButton>筹</ChipButton>
          <AdjustButton>
            <Info>i</Info>
            前复权
          </AdjustButton>
        </Legend>
        <ChartArea>
          <CandleChart />
          <RoundButton $left={16} aria-label="前进">
            <svg viewBox="0 0 59 59" fill="none" stroke="#fff" strokeWidth="5">
              <path d="M16 17l12 12.500L16 42M31 17l12 12.500L31 42" />
            </svg>
          </RoundButton>
          <RoundButton $left={140} aria-label="全屏">
            <svg viewBox="0 0 59 59" fill="none" stroke="#fff" strokeWidth="5">
              <path d="M16 30V16h14M30 43h14V30" />
            </svg>
          </RoundButton>
        </ChartArea>
        <Dates>
          <span>2025/03/05</span>
          <span>2025/05/29</span>
        </Dates>

        <IndicatorBar>
          <IndicatorSelect $info>
            <Info>i</Info>
            <select aria-label="成交量指标">
              <option>VOL(5,10)</option>
            </select>
            <Triangle $tall $color="#999" />
          </IndicatorSelect>
          <Value>
            VOL:57.45万 MA 5:25.51万 <Value $color={ORANGE}>10:17.72万</Value>
          </Value>
        </IndicatorBar>
        <ChartArea>
          <VolumeChart />
        </ChartArea>
        <IndicatorBar>
          <IndicatorSelect>
            <select aria-label="副图指标">
              <option>MACD(12,26,9)</option>
            </select>
            <Triangle $tall $color="#999" />
          </IndicatorSelect>
          <Value>
            DIFF:0.07 <Value $color={ORANGE}>DEA:0.00</Value> <Value $color="#c31bdc">MACD:0.13</Value>
          </Value>
        </IndicatorBar>
        <ChartArea>
          <MacdChart />
        </ChartArea>

        <Chips>
          <ChipScroll>
            {["神奇九转", "D信号", "网格大师2.0", "资金博弈", "相似K线"].map((name) => (
              <Chip key={name}>{name}</Chip>
            ))}
          </ChipScroll>
          <Chip $tight>设置</Chip>
        </Chips>
        <Band />

        <DetailTabs>
          {["动态", "机会", "资金", "资料(F10)", "公告", "研报", "诊股"].map((name) => (
            <DetailTab key={name} $active={detail === name} onClick={() => setDetail(name)}>
              {name}
            </DetailTab>
          ))}
        </DetailTabs>
        <Cards>
          {["操盘必读", "大事提醒", "财务分析", "概念题材"].map((name) => (
            <Card key={name} $active={card === name} onClick={() => setCard(name)}>
              {name}
            </Card>
          ))}
        </Cards>
      </Content>

      <IndexBar>
        <h2>深证成指</h2>
        <strong>10127.20</strong>
        <span>+123.93</span>
        <span>+1.24%</span>
        <button aria-label="展开指数">
          <Triangle $up $color="#999" />
        </button>
      </IndexBar>
      <ActionBar>
        <TradeButton $bg="#eb1a1a">买入</TradeButton>
        <TradeButton $bg="#1074ee" $last>
          卖出
        </TradeButton>
        <Actions>
          {actions.map(([name, icon]) => (
            <Action key={name}>
              <svg width="55" height="55" viewBox="0 0 55 55" fill="none" stroke="#666" strokeWidth="4" strokeLinecap="round" strokeLinejoin="round">
                {icon}
              </svg>
              {name}
            </Action>
          ))}
        </Actions>
      </ActionBar>
    </Page>
  );
}

export default App;
